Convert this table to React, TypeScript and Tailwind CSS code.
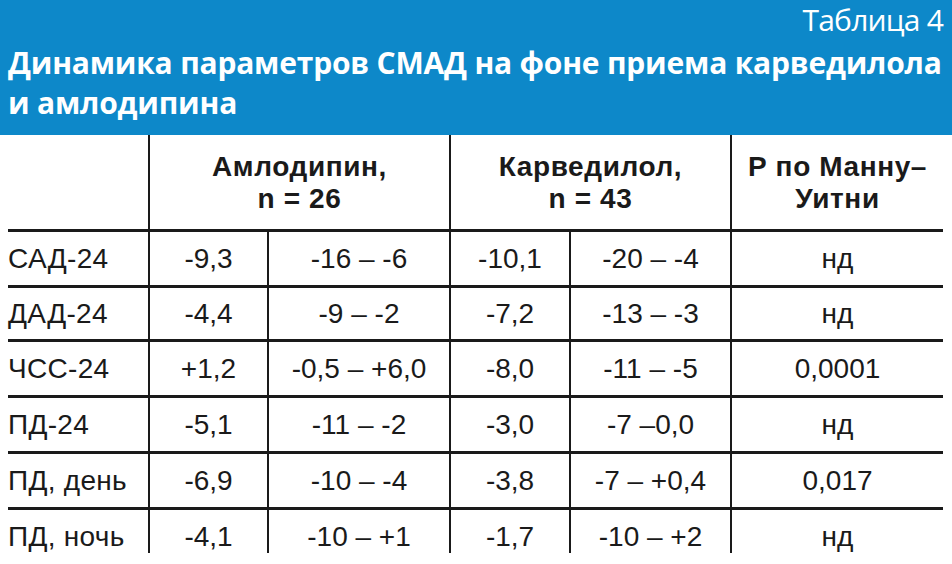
import React from "react";

const rows = [
  { name: "САД-24", a: "-9,3", ar: "-16 – -6", k: "-10,1", kr: "-20 – -4", p: "нд", h: "h-[56px]" },
  { name: "ДАД-24", a: "-4,4", ar: "-9 – -2", k: "-7,2", kr: "-13 – -3", p: "нд", h: "h-[54px]" },
  { name: "ЧСС-24", a: "+1,2", ar: "-0,5 – +6,0", k: "-8,0", kr: "-11 – -5", p: "0,0001", h: "h-[56px]" },
  { name: "ПД-24", a: "-5,1", ar: "-11 – -2", k: "-3,0", kr: "-7 –0,0", p: "нд", h: "h-[56px]" },
  { name: "ПД, день", a: "-6,9", ar: "-10 – -4", k: "-3,8", kr: "-7 – +0,4", p: "0,017", h: "h-[56px]" },
  { name: "ПД, ночь", a: "-4,1", ar: "-10 – +1", k: "-1,7", kr: "-10 – +2", p: "нд", h: "h-[46px]" },
];

export default function App() {
  return (
    <div className="w-[952px] h-[564px] bg-white overflow-hidden text-[#1a1a1a] font-['Liberation_Sans',Arial,sans-serif]">
      {/* Title band */}
      <div className="h-[135px] bg-[#0d88c9] px-[8px] text-white font-['Open_Sans',sans-serif]">
        <div className="flex justify-end pt-[3px] pr-[1px] text-[30px] leading-[34px] tracking-[-0.8px]">
          Таблица 4
        </div>
        <div className="mt-[6px] text-[30px] leading-[40px] font-bold tracking-[-0.2px]">
          Динамика параметров СМАД на фоне приема карведилола
          <br />
          и амлодипина
        </div>
      </div>

      {/* Table */}
      <div className="ml-[8px] w-[935px] grid grid-cols-[140px_119px_182px_120px_161px_213px] text-[28px] leading-[32px]">
        <div className="h-[94px]" />
        <div className="col-span-2 h-[94px] border-l-2 border-[#1a1a1a] flex flex-col items-center justify-center font-bold tracking-[0.6px] pt-[2px]">
          <span>Амлодипин,</span>
          <span>n = 26</span>
        </div>
        <div className="col-span-2 h-[94px] border-l-2 border-[#1a1a1a] flex flex-col items-center justify-center font-bold tracking-[0.6px] pt-[2px]">
          <span>Карведилол,</span>
          <span>n = 43</span>
        </div>
        <div className="h-[94px] border-l-2 border-[#1a1a1a] flex flex-col items-center justify-center font-bold tracking-[0.6px] pt-[2px]">
          <span>Р по Манну–</span>
          <span>Уитни</span>
        </div>

        {rows.map((r, i) => {
          const last = i === rows.length - 1;
          const base = `${r.h} border-t-[3px] border-[#1a1a1a] flex ${last ? "items-start pt-[11px]" : "items-center"}`;
          return (
            <React.Fragment key={r.name}>
              <div className={`${base} pl-0 tracking-[0.3px]`}>{r.name}</div>
              <div className={`${base} border-l-2 justify-center`}>{r.a}</div>
              <div className={`${base} border-l-2 justify-center`}>{r.ar}</div>
              <div className={`${base} border-l-2 justify-center`}>{r.k}</div>
              <div className={`${base} border-l-2 justify-center`}>{r.kr}</div>
              <div className={`${base} border-l-2 justify-center`}>{r.p}</div>
            </React.Fragment>
          );
        })}
      </div>
    </div>
  );
}
